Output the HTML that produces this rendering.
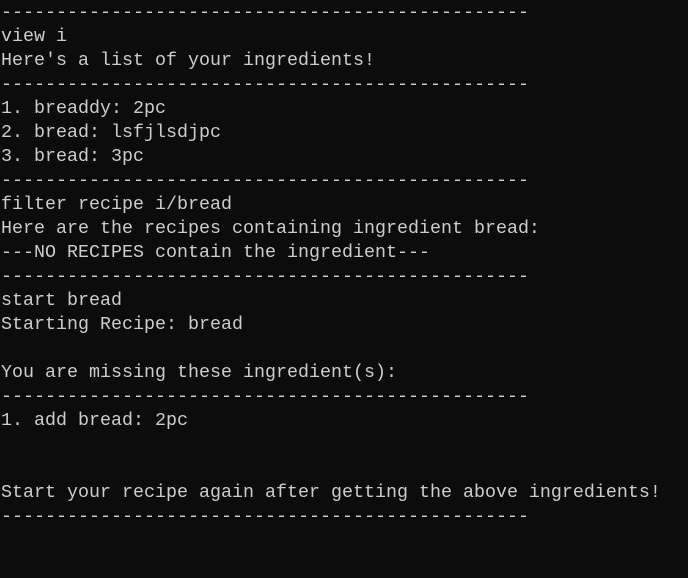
<!DOCTYPE html>
<html><head><style>
html,body{margin:0;padding:0;background:#0c0c0c;width:688px;height:578px;overflow:hidden}
pre{margin:0;position:absolute;top:1px;left:1px;font-family:"Liberation Mono",monospace;font-size:18.33px;line-height:24px;color:#cccccc}
</style></head><body><pre>------------------------------------------------
view i
Here's a list of your ingredients!
------------------------------------------------
1. breaddy: 2pc
2. bread: lsfjlsdjpc
3. bread: 3pc
------------------------------------------------
filter recipe i/bread
Here are the recipes containing ingredient bread:
---NO RECIPES contain the ingredient---
------------------------------------------------
start bread
Starting Recipe: bread

You are missing these ingredient(s):
------------------------------------------------
1. add bread: 2pc


Start your recipe again after getting the above ingredients!
------------------------------------------------
</pre></body></html>
